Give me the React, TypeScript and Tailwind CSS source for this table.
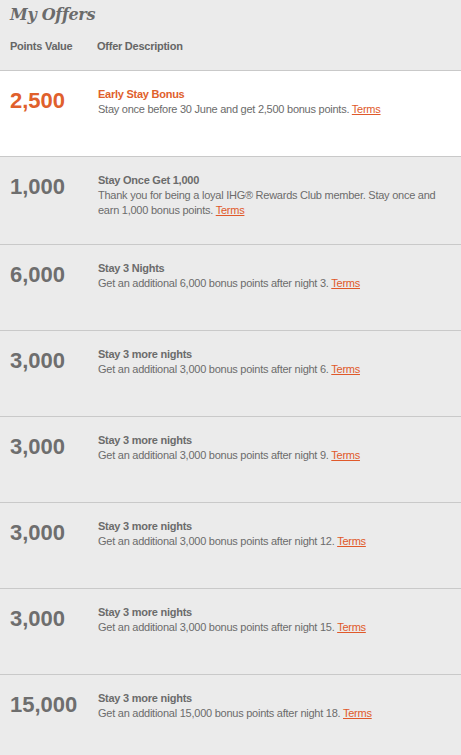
import React from "react";

type Offer = {
  points: string;
  title: string;
  desc: string;
  active?: boolean;
  tall?: boolean;
};

const offers: Offer[] = [
  { points: "2,500", title: "Early Stay Bonus", desc: "Stay once before 30 June and get 2,500 bonus points.", active: true },
  { points: "1,000", title: "Stay Once Get 1,000", desc: "Thank you for being a loyal IHG® Rewards Club member. Stay once and earn 1,000 bonus points.", tall: true },
  { points: "6,000", title: "Stay 3 Nights", desc: "Get an additional 6,000 bonus points after night 3." },
  { points: "3,000", title: "Stay 3 more nights", desc: "Get an additional 3,000 bonus points after night 6." },
  { points: "3,000", title: "Stay 3 more nights", desc: "Get an additional 3,000 bonus points after night 9." },
  { points: "3,000", title: "Stay 3 more nights", desc: "Get an additional 3,000 bonus points after night 12." },
  { points: "3,000", title: "Stay 3 more nights", desc: "Get an additional 3,000 bonus points after night 15." },
  { points: "15,000", title: "Stay 3 more nights", desc: "Get an additional 15,000 bonus points after night 18." },
];

export default function App() {
  return (
    <div className="w-[461px] h-[755px] overflow-hidden bg-[#ebebeb] font-['Liberation_Sans',Arial,sans-serif] text-[#6b6b6b]">
      <div className="h-[70px] px-[10px] pt-[5px]">
        <h1 className="font-['DejaVu_Serif',Georgia,serif] font-bold italic text-[16px] leading-[20px] tracking-[-0.3px] text-[#6b6b6b]">
          My Offers
        </h1>
        <div className="mt-[14px] flex text-[11px] leading-[15px] tracking-[-0.25px] font-bold text-[#666]">
          <div className="w-[87px]">Points Value</div>
          <div>Offer Description</div>
        </div>
      </div>
      {offers.map((o, i) => (
        <div
          key={i}
          className={
            "flex items-start border-t border-[#c9c9c9] pl-[10px] pr-[15px] pt-[16px] " +
            (o.tall ? "h-[88px] " : "h-[86px] ") +
            (o.active ? "bg-white" : "bg-[#ebebeb]")
          }
        >
          <div
            className={
              "w-[88px] shrink-0 mt-[1px] text-[22px] leading-[25px] font-bold " +
              (o.active ? "text-[#e0602c]" : "text-[#6e6e6e]")
            }
          >
            {o.points}
          </div>
          <div className="flex-1 text-[11px] leading-[15px] tracking-[-0.25px]">
            <div className={"font-bold " + (o.active ? "text-[#e0602c]" : "text-[#6b6b6b]")}>
              {o.title}
            </div>
            <div className="text-[#6b6b6b]">
              {o.desc}{" "}
              <a href="#" className="text-[#e0592a] underline">
                Terms
              </a>
            </div>
          </div>
        </div>
      ))}
    </div>
  );
}
